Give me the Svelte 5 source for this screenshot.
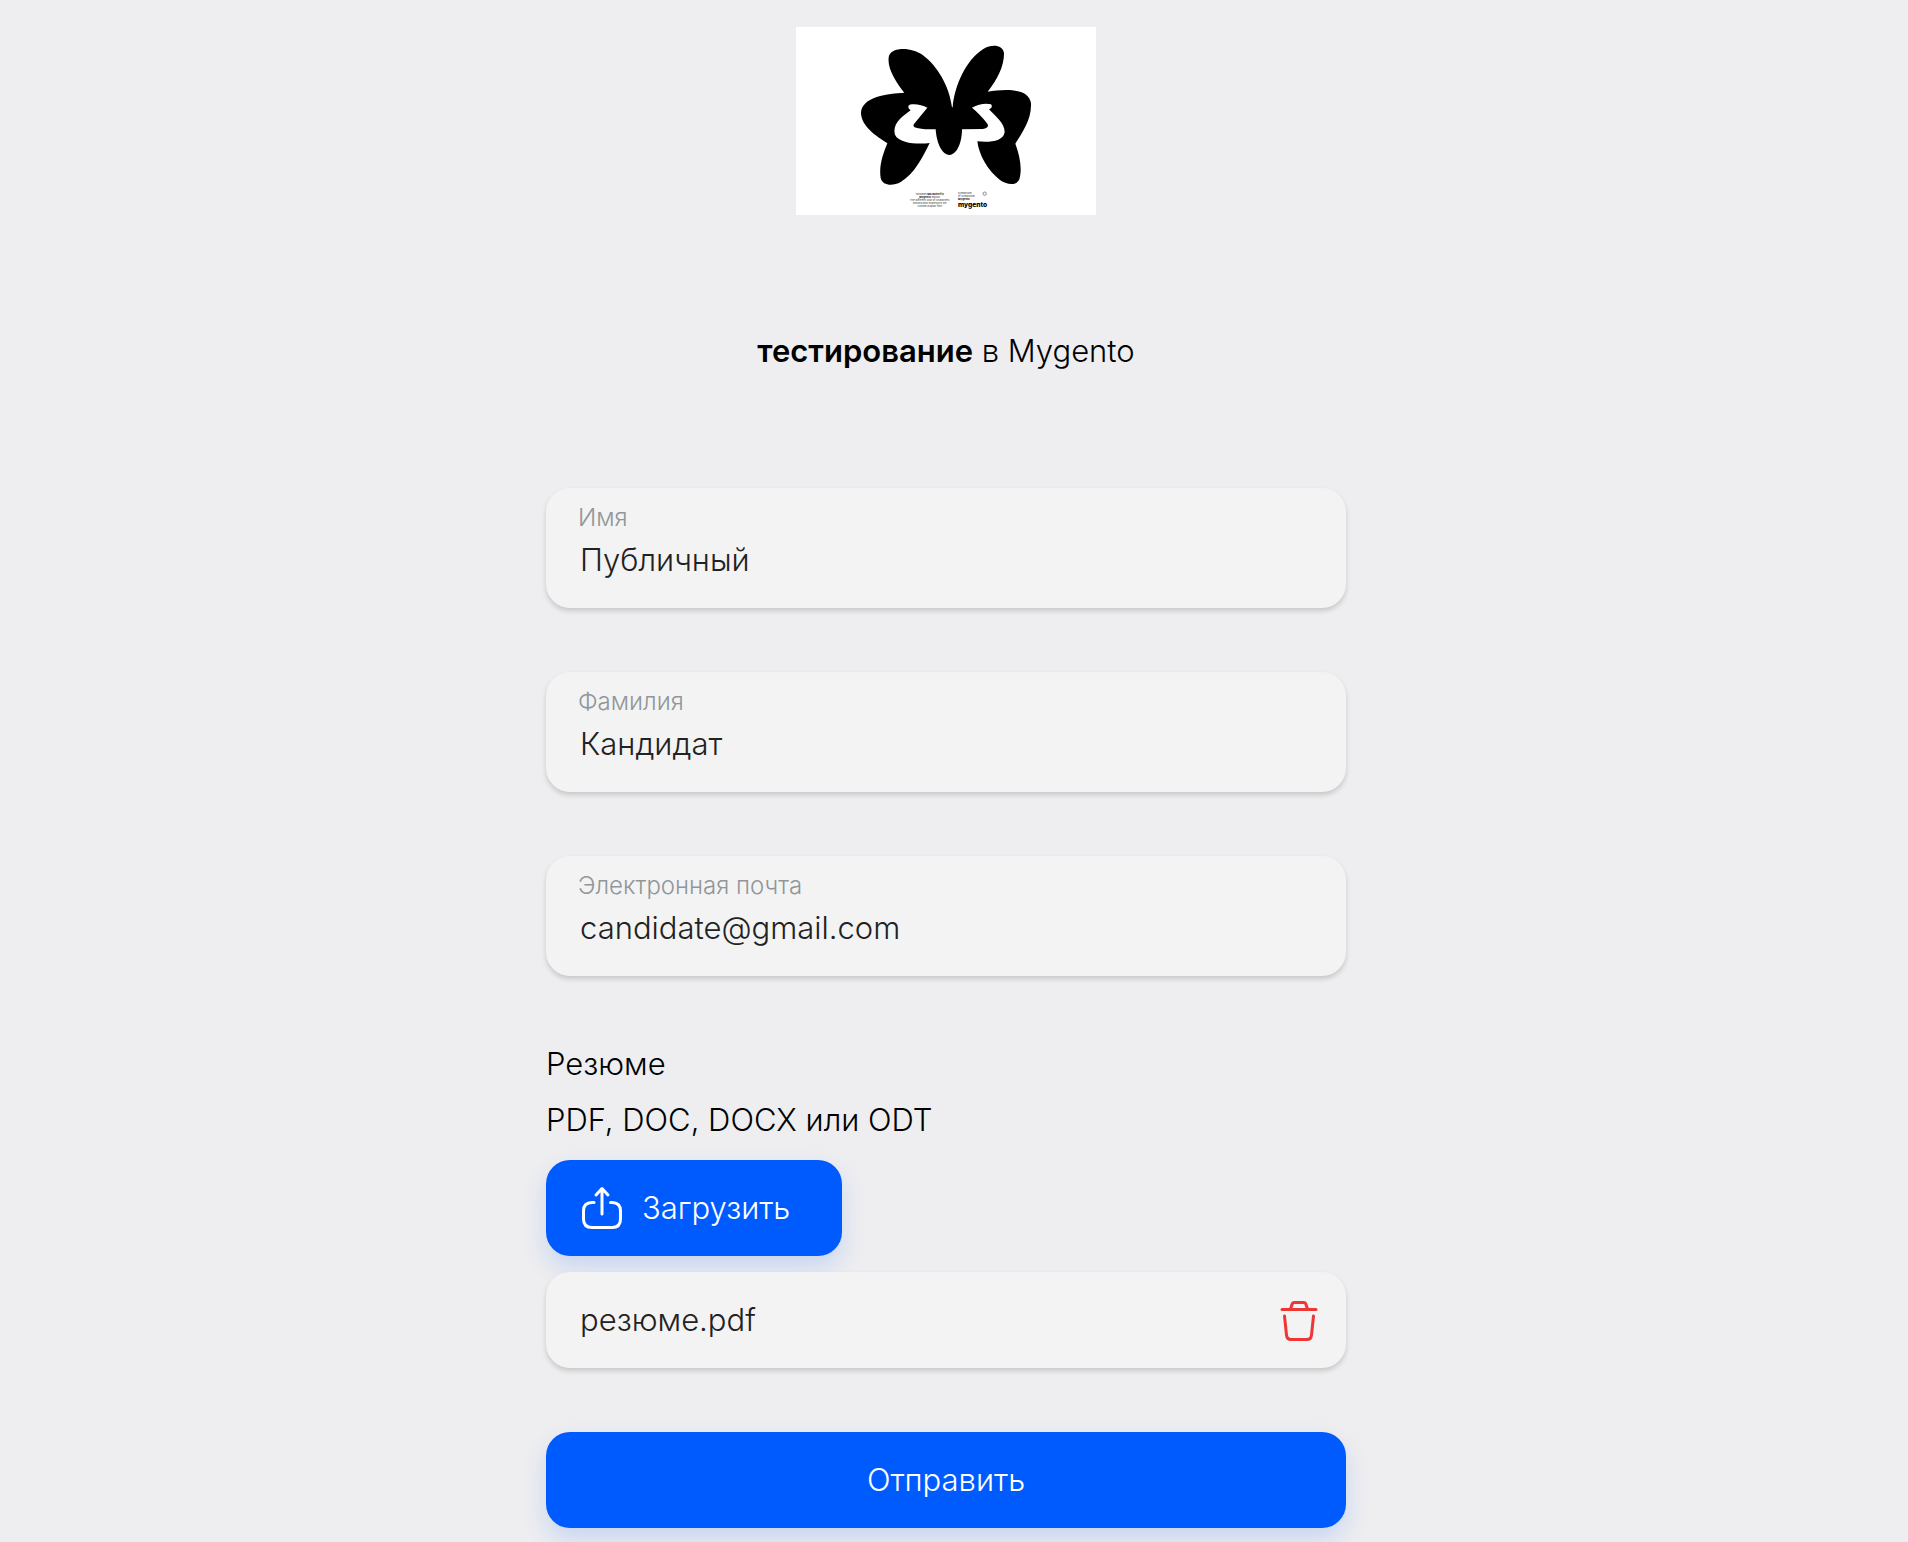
<script>
  let fields = $state([
    { id: 'first-name', label: 'Имя', type: 'text', value: 'Публичный' },
    { id: 'last-name', label: 'Фамилия', type: 'text', value: 'Кандидат' },
    { id: 'email', label: 'Электронная почта', type: 'email', value: 'candidate@gmail.com' }
  ]);

  let fileName = $state('резюме.pdf');
  let fileInput;

  function handleFile(e) {
    const file = e.target.files[0];
    if (file) fileName = file.name;
  }

  function removeFile() {
    fileName = '';
    fileInput.value = '';
  }

  function handleSubmit(e) {
    e.preventDefault();
  }
</script>

<main>
  <svg class="logo" viewBox="30 27 900 564" role="img" aria-label="Mygento">
    <rect x="30" y="27" width="900" height="564" fill="#fff" />
    <path d="M498 268C490 205 455 145 411 112C382 90 322 84 309 113C301 147 328 190 355 224C308 226 225 236 225 286C227 326 269 353 304 376C292 405 278 444 284 480C290 504 321 505 344 492C385 468 410 418 431 375C401 379 340 378 327 350C318 319 346 297 374 277C367 273 364 264 371 260C388 256 409 261 424 269L384 318C377 328 391 334 449 334C451 369 465 411 491 411C515 409 528 370 528 334L590 333C604 331 609 325 604 317C591 300 576 283 558 269C577 259 598 254 615 259C620 265 617 272 609 274C627 294 656 315 656 342C653 370 611 374 574 370C579 413 607 459 641 485C658 498 690 507 700 484C710 450 700 411 688 377C707 345 737 306 735 256C729 208 653 213 605 221C633 187 655 144 654 105C650 80 617 78 592 93C540 125 505 204 500 268Z" />
    <g class="caption">
      <text x="431" y="532">Talisman <tspan class="heavy">M8 Butterfly</tspan></text>
      <text x="431" y="541"><tspan class="heavy">Mygento</tspan> edition</text>
      <text x="431" y="550">The different look of characters</text>
      <text x="431" y="559">Second and expressive set</text>
      <text x="431" y="568">custom display font</text>
    </g>
    <g class="caption start">
      <text x="516" y="528">symbolism</text>
      <text x="516" y="536">of symbolism</text>
      <text x="516" y="547" class="heavy">Mygento</text>
    </g>
    <circle cx="596" cy="527" r="5" fill="none" stroke="#555" stroke-width="2" />
    <text x="516" y="567" class="brand">mygento</text>
  </svg>

  <h1><b>тестирование</b> в Mygento</h1>

  <form onsubmit={handleSubmit}>
    {#each fields as field (field.id)}
      <div class="field">
        <label for={field.id}>{field.label}</label>
        <input id={field.id} name={field.id} type={field.type} bind:value={field.value} />
      </div>
    {/each}

    <section class="resume">
      <p>Резюме</p>
      <p>PDF, DOC, DOCX или ODT</p>

      <button type="button" class="primary upload" onclick={() => fileInput.click()}>
        <svg viewBox="0 0 42 44" width="42" height="44" aria-hidden="true">
          <path d="M13 16.500H11Q2.500 16.500 2.500 25V33Q2.500 41.500 11 41.500H31Q39.500 41.500 39.500 33V25Q39.500 16.500 31 16.500H29.500M21 28V3M15 9L21 2.500L27 9" />
        </svg>
        Загрузить
      </button>
      <input
        bind:this={fileInput}
        type="file"
        accept=".pdf,.doc,.docx,.odt"
        aria-label="Резюме"
        hidden
        onchange={handleFile}
      />

      {#if fileName}
        <div class="file">
          <span>{fileName}</span>
          <button type="button" class="remove" aria-label="Удалить" onclick={removeFile}>
            <svg viewBox="0 0 40 44" width="40" height="44" aria-hidden="true">
              <path d="M3 11.500H37M11.500 11L13 6.500Q13.500 4.500 15.500 4.500H24.500Q26.500 4.500 27 6.500L28.500 11M5.500 18L7.500 37Q8 41.500 12 41.500H28Q32 41.500 32.500 37L34.500 18" />
            </svg>
          </button>
        </div>
      {/if}
    </section>

    <button type="submit" class="primary">Отправить</button>
  </form>
</main>

<style>
  :global(body) {
    background: #eeeef0;
  }
  main {
    display: flex;
    flex-direction: column;
    align-items: center;
    padding: 27px 16px 14px 0;
    font-family: Inter, "Open Sans", sans-serif;
    font-size: 31px;
    font-weight: 300;
    line-height: 40px;
    color: #000;
  }
  .logo {
    display: block;
    width: 300px;
    height: 188px;
  }
  .caption {
    font-size: 8px;
    font-weight: 400;
    fill: #333;
    text-anchor: middle;
  }
  .caption.start {
    text-anchor: start;
  }
  .heavy {
    font-weight: 800;
  }
  .brand {
    font-size: 20px;
    font-weight: 800;
  }
  h1 {
    margin: 116px 0 117px;
    font-size: inherit;
    font-weight: 300;
  }
  h1 b {
    font-weight: 600;
  }
  form {
    display: flex;
    flex-direction: column;
    gap: 64px;
    width: 100%;
    max-width: 800px;
  }
  .field,
  .file {
    box-sizing: border-box;
    border-radius: 24px;
    background: #f3f3f3;
    box-shadow: 0 3px 5px rgba(0, 0, 0, 0.16);
    color: #222;
  }
  .field {
    display: flex;
    flex-direction: column;
    height: 120px;
    padding: 16px 32px;
  }
  .field label {
    font-size: 24px;
    line-height: 28px;
    color: #90969a;
  }
  .field input {
    border: 0;
    outline: 0;
    padding: 0 2px;
    background: none;
    font: inherit;
    line-height: 40px;
    height: 54px;
    color: inherit;
  }
  .resume {
    display: flex;
    flex-direction: column;
    align-items: flex-start;
  }
  .resume p {
    margin: 0 0 8px;
    line-height: 48px;
  }
  .primary {
    display: flex;
    align-items: center;
    justify-content: center;
    height: 96px;
    border: 0;
    border-radius: 24px;
    background: #005bff;
    box-shadow: 0 12px 24px rgba(0, 91, 255, 0.16);
    color: #fff;
    font: inherit;
    cursor: pointer;
  }
  .upload {
    gap: 19px;
    margin-top: 8px;
    padding: 0 52px 0 35px;
  }
  .primary svg,
  .remove svg {
    display: block;
    fill: none;
    stroke: currentColor;
    stroke-width: 3;
    stroke-linecap: round;
    stroke-linejoin: round;
  }
  .file {
    position: relative;
    display: flex;
    align-items: center;
    justify-content: space-between;
    width: 100%;
    height: 96px;
    margin-top: 16px;
    padding: 0 27px 0 34px;
  }
  .remove {
    padding: 0;
    border: 0;
    background: none;
    color: #ee3636;
    cursor: pointer;
  }
</style>
